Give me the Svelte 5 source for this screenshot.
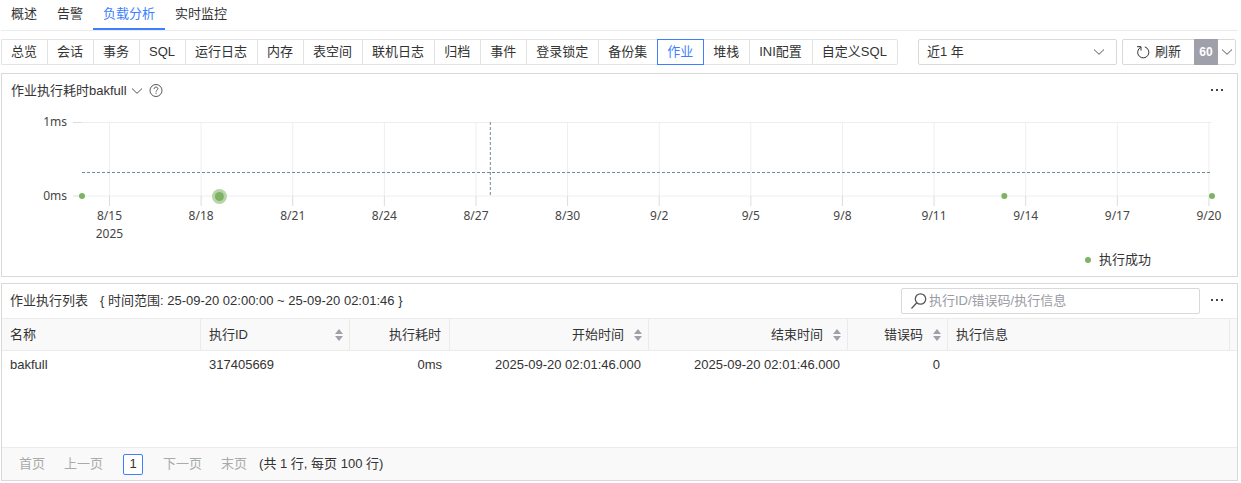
<script lang="ts">
  const tabs = ["概述", "告警", "负载分析", "实时监控"];
  const sections = [
    "总览", "会话", "事务", "SQL", "运行日志", "内存", "表空间", "联机日志",
    "归档", "事件", "登录锁定", "备份集", "作业", "堆栈", "INI配置", "自定义SQL",
  ];

  let activeTab = $state("负载分析");
  let activeSection = $state("作业");

  // x values are days since the start of the range
  const span = 37;
  const ticks = [
    "8/15", "8/18", "8/21", "8/24", "8/27", "8/30", "9/2",
    "9/5", "9/8", "9/11", "9/14", "9/17", "9/20",
  ].map((label, i) => ({ label, day: 0.9 + i * 3 }));
  const points = [
    { day: 0, hover: false },
    { day: 4.5, hover: true },
    { day: 30.2, hover: false },
    { day: 37, hover: false },
  ];
  const x = (day: number) => `${(day / span) * 100}%`;

  const columns = [
    { label: "名称", cls: "c-name", right: false, sort: false },
    { label: "执行ID", cls: "c-id", right: false, sort: true },
    { label: "执行耗时", cls: "c-cost", right: true, sort: false },
    { label: "开始时间", cls: "c-time", right: true, sort: true },
    { label: "结束时间", cls: "c-time", right: true, sort: true },
    { label: "错误码", cls: "c-cost", right: true, sort: true },
    { label: "执行信息", cls: "", right: false, sort: false },
  ];
  const rows = [
    ["bakfull", "317405669", "0ms", "2025-09-20 02:01:46.000", "2025-09-20 02:01:46.000", "0", ""],
  ];
</script>

{#snippet chevron()}
  <svg class="chevron" width="12" height="8" viewBox="0 0 12 8" aria-hidden="true">
    <path d="M1 1.5 6 6.3 11 1.5" />
  </svg>
{/snippet}

{#snippet more()}
  <button class="plain more" aria-label="更多">
    <svg width="14" height="4" viewBox="0 0 14 4" aria-hidden="true">
      <path d="M1 0h2v2H1zM6 0h2v2H6zM11 0h2v2h-2z" />
    </svg>
  </button>
{/snippet}

<div class="page">
  <nav class="tabs">
    {#each tabs as tab}
      <button class="plain" class:active={tab === activeTab} onclick={() => (activeTab = tab)}>{tab}</button>
    {/each}
  </nav>

  <div class="toolbar">
    <div class="sections">
      {#each sections as section}
        <button class:active={section === activeSection} onclick={() => (activeSection = section)}>{section}</button>
      {/each}
    </div>
    <div class="range">
      <select aria-label="时间范围">
        <option>近1 年</option>
      </select>
      {@render chevron()}
    </div>
    <div class="refresh">
      <button class="plain reload">
        <svg width="14" height="14" viewBox="0 0 14 14" aria-hidden="true">
          <path d="M4.7 2.3A5.6 5.6 0 1 0 8.8 1.9M1 1.7h4v3.9" />
        </svg>
        刷新
      </button>
      <span class="seconds">60</span>
      <button class="plain interval" aria-label="刷新间隔">{@render chevron()}</button>
    </div>
  </div>

  <section class="panel chart-panel">
    <header>
      <button class="plain metric">作业执行耗时bakfull {@render chevron()}</button>
      <button class="plain help" aria-label="帮助">
        <svg width="14" height="14" viewBox="0 0 14 14" aria-hidden="true">
          <circle cx="7" cy="6.5" r="6" />
          <path d="M5.1 5c0-1.2.8-1.9 1.9-1.9s1.9.7 1.9 1.7c0 1.3-1.8 1.4-1.8 2.8M7.1 8.7v1.2" />
        </svg>
      </button>
      {@render more()}
    </header>
    <div class="chart">
      <svg width="100%" height="130" role="img" aria-label="作业执行耗时">
        <g class="grid">
          <line x1="0" x2="100%" y1="10.5" y2="10.5" />
          <line x1="0" x2="100%" y1="84" y2="84" />
          {#each ticks as tick}
            <line x1={x(tick.day)} x2={x(tick.day)} y1="11" y2="84" />
          {/each}
        </g>
        <g class="ticks">
          <line x1="-9" x2="0" y1="10.5" y2="10.5" />
          <line x1="-9" x2="0" y1="84" y2="84" />
          {#each ticks as tick}
            <line x1={x(tick.day)} x2={x(tick.day)} y1="84" y2="94" />
          {/each}
        </g>
        <g class="cross">
          <line x1="0" x2="100%" y1="60.5" y2="60.5" />
          <line x1={x(13.37)} x2={x(13.37)} y1="10" y2="84" />
        </g>
        <text class="end" x="-15" y="14">1ms</text>
        <text class="end" x="-15" y="88">0ms</text>
        {#each ticks as tick, i}
          <text x={x(tick.day)} y="108">{tick.label}</text>
          {#if i === 0}
            <text x={x(tick.day)} y="126">2025</text>
          {/if}
        {/each}
        {#each points as point}
          {#if point.hover}
            <circle class="halo" cx={x(point.day)} cy="84.5" r="7.5" />
          {/if}
          <circle cx={x(point.day)} cy={point.hover ? 84.5 : 84} r={point.hover ? 4.5 : 3} />
        {/each}
      </svg>
    </div>
    <div class="legend"><i></i>执行成功</div>
  </section>

  <section class="panel">
    <header>
      <h2>作业执行列表</h2>
      <span>{"{ 时间范围: 25-09-20 02:00:00 ~ 25-09-20 02:01:46 }"}</span>
      <label class="search">
        <svg width="18" height="18" viewBox="0 0 18 18" aria-hidden="true">
          <circle cx="10.5" cy="7" r="5.2" />
          <path d="M6.8 10.8 1.5 16.5" />
        </svg>
        <input type="text" aria-label="搜索" placeholder="执行ID/错误码/执行信息" />
      </label>
      {@render more()}
    </header>
    <div class="table-body">
      <table>
        <thead>
          <tr>
            {#each columns as col}
              <th class={col.cls} class:right={col.right} scope="col">
                <div>
                  <span>{col.label}</span>
                  {#if col.sort}
                    <svg width="8" height="12" viewBox="0 0 8 12" aria-hidden="true">
                      <path d="M4 0 8 5H0zM0 7h8L4 12z" />
                    </svg>
                  {/if}
                </div>
              </th>
            {/each}
            <td class="gutter"></td>
          </tr>
        </thead>
        <tbody>
          {#each rows as row}
            <tr>
              {#each row as cell, i}
                <td class:right={columns[i].right}>{cell}</td>
              {/each}
              <td></td>
            </tr>
          {/each}
        </tbody>
      </table>
    </div>
    <footer>
      <button class="plain" disabled>首页</button>
      <button class="plain" disabled>上一页</button>
      <button class="plain current">1</button>
      <button class="plain" disabled>下一页</button>
      <button class="plain" disabled>末页</button>
      <span>(共 1 行, 每页 100 行)</span>
    </footer>
  </section>
</div>

<style>
  :global(body) {
    background: #fff;
  }

  .page {
    padding: 0 3px 0 1px;
    color: #333;
    font: 13px/18px "Liberation Sans", "Noto Sans CJK SC", sans-serif;
  }

  .page * {
    box-sizing: border-box;
  }

  button,
  input,
  select {
    font: inherit;
    color: inherit;
  }

  .plain {
    padding: 0;
    border: 0;
    background: none;
  }

  svg {
    display: block;
    flex: none;
  }

  .chevron,
  .help svg,
  .reload svg,
  .search svg {
    fill: none;
    stroke: #555;
  }

  .tabs {
    display: flex;
    height: 31px;
    border-bottom: 1px solid #ebebeb;
  }

  .tabs button {
    padding: 0 10px;
    border-bottom: 2px solid transparent;
  }

  .tabs .active {
    color: #3d7fff;
    border-color: #3d7fff;
  }

  .toolbar {
    display: flex;
    height: 26px;
    margin: 8px 2px 8px 0;
  }

  .sections {
    display: flex;
    flex: none;
    margin-right: auto;
  }

  .sections button {
    padding: 0 10px 0 9px;
    border: 1px solid #e3e3e3;
    border-right: 0;
    background: #fff;
    white-space: nowrap;
  }

  .sections button:first-child {
    border-radius: 2px 0 0 2px;
  }

  .sections button:last-child {
    border-right: 1px solid #e3e3e3;
    border-radius: 0 2px 2px 0;
  }

  .sections .active {
    position: relative;
    color: #3d7fff;
    border-color: #3d7fff;
    box-shadow: 1px 0 #3d7fff;
  }

  .range {
    display: flex;
    align-items: center;
    width: 199px;
    margin-right: 5px;
    padding-right: 11px;
    border: 1px solid #d9d9d9;
    border-radius: 2px;
  }

  .range select {
    flex: 1;
    height: 24px;
    padding: 0 8px;
    border: 0;
    background: none;
    appearance: none;
  }

  .refresh {
    display: flex;
    border: 1px solid #d9d9d9;
    border-radius: 2px;
  }

  .reload {
    display: flex;
    align-items: center;
    gap: 5px;
    width: 71px;
    padding-left: 13px;
  }

  .reload svg {
    stroke: #333;
  }

  .seconds {
    width: 24px;
    margin: -1px 0;
    background: #a0a0aa;
    color: #fff;
    font-size: 12px;
    font-weight: bold;
    line-height: 26px;
    text-align: center;
  }

  .interval {
    display: grid;
    place-items: center;
    width: 17px;
  }

  .panel {
    margin-bottom: 6px;
    border: 1px solid #d9d9d9;
  }

  .panel:last-child {
    margin-bottom: 0;
  }

  header {
    display: flex;
    align-items: center;
    height: 34px;
    padding: 0 13px 0 8px;
  }

  h2 {
    margin: 0 12px 0 0;
    font: inherit;
  }

  .metric {
    display: flex;
    align-items: center;
    gap: 4px;
    margin: 0 6px 0 1px;
  }

  .more {
    margin-left: auto;
  }

  .more svg {
    fill: #444;
  }

  .chart {
    padding: 4px 25px 0 80px;
  }

  .chart svg {
    overflow: visible;
  }

  .chart text {
    fill: #464646;
    font: 12px "Noto Sans", sans-serif;
    text-anchor: middle;
  }

  .chart .end {
    text-anchor: end;
  }

  .grid {
    stroke: #eee;
  }

  .ticks {
    stroke: #dcdcdc;
  }

  .cross {
    stroke: #6f8a96;
    stroke-dasharray: 3 2;
  }

  circle {
    fill: #7eb265;
  }

  .halo {
    fill: #b7d5a9;
  }

  .help circle,
  .search circle {
    fill: none;
  }

  .legend {
    display: flex;
    align-items: center;
    justify-content: flex-end;
    gap: 8px;
    padding: 9px 86px 7px 0;
  }

  .legend i {
    width: 6px;
    height: 6px;
    border-radius: 50%;
    background: #7eb265;
  }

  .search {
    display: flex;
    align-items: center;
    width: 299px;
    height: 26px;
    margin-left: auto;
    padding-left: 8px;
    border: 1px solid #d9d9d9;
    border-radius: 2px;
  }

  .search svg {
    stroke-width: 1.3;
  }

  .search + :global(.more) {
    margin-left: 10px;
  }

  .search input {
    flex: 1;
    min-width: 0;
    padding: 0 1px;
    border: 0;
    outline: 0;
    background: none;
  }

  .search input::placeholder {
    color: #9b9ba5;
  }

  .table-body {
    min-height: 129px;
  }

  table {
    width: 100%;
    border-collapse: separate;
    border-spacing: 0;
    table-layout: fixed;
  }

  th,
  .gutter {
    height: 33px;
    padding: 0 8px;
    border: solid #ebebeb;
    border-width: 1px 1px 1px 0;
    background: #f9f9f9;
    font-weight: normal;
    text-align: left;
  }

  .gutter {
    width: 7px;
    padding: 0;
    border-right: 0;
  }

  .c-name,
  .c-time {
    width: 199px;
  }

  .c-id {
    width: 149px;
  }

  .c-cost {
    width: 100px;
  }

  th div {
    display: flex;
    align-items: center;
    justify-content: space-between;
  }

  th.right div {
    justify-content: flex-end;
    gap: 10px;
  }

  th svg {
    margin-right: -2px;
    fill: #a0a0aa;
  }

  tbody td {
    height: 28px;
    padding: 0 8px;
  }

  .right {
    text-align: right;
  }

  footer {
    display: flex;
    align-items: center;
    height: 33px;
    padding-left: 17px;
    border-top: 1px solid #ebebeb;
    background: #f9f9f9;
  }

  footer button {
    margin-right: 19px;
  }

  footer button:disabled {
    color: #aaa;
  }

  footer .current {
    width: 20px;
    height: 21px;
    margin: 0 20px 0 1px;
    border: 1px solid #3d7fff;
    border-radius: 2px;
    background: #fff;
  }

  footer span {
    margin-left: -7px;
  }
</style>
